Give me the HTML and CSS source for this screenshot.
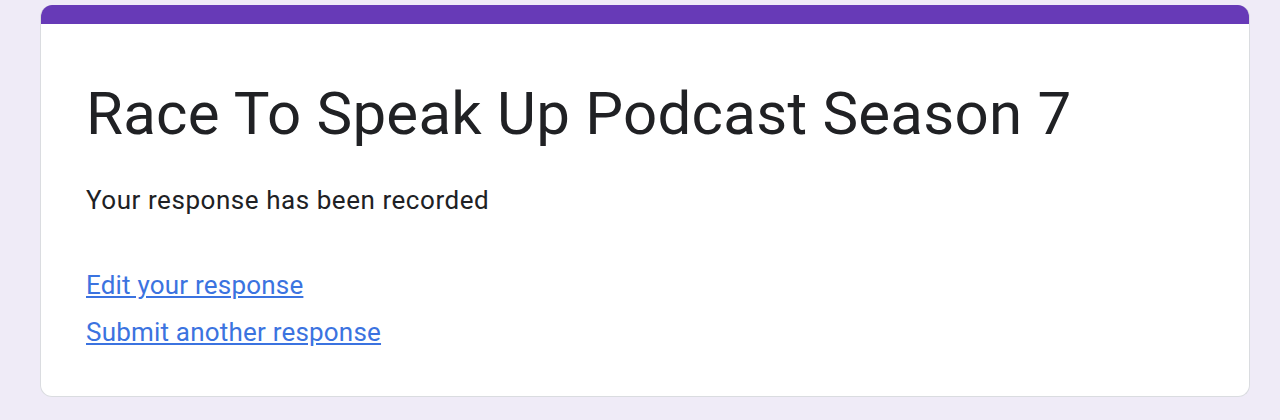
FILE: index.html
```html
<!DOCTYPE html>
<html>
<head>
<meta charset="utf-8">
<link rel="stylesheet" href="styles.css">
</head>
<body>
<div class="page">
  <div class="card">
    <div class="card-top"></div>
    <div class="card-body">
      <h1 class="title">Race To Speak Up Podcast Season 7</h1>
      <p class="message">Your response has been recorded</p>
      <div class="links">
        <a class="link" href="#">Edit your response</a>
        <a class="link" href="#">Submit another response</a>
      </div>
    </div>
  </div>
</div>
</body>
</html>
```
FILE: styles.css
```css
html, body {
  margin: 0;
  padding: 0;
  background: #efebf7;
  font-family: Roboto, "Noto Sans", Arial, sans-serif;
}
.page {
  padding: 5px 30px 0 40px;
}
.card {
  background: #fff;
  border: 1px solid #dadce0;
  border-top: none;
  border-radius: 12px;
  overflow: hidden;
  height: 392px;
  box-sizing: border-box;
}
.card-top {
  height: 19px;
  background: #673ab7;
}
.card-body {
  padding: 0 45px;
}
.title {
  margin: 54px 0 0;
  font-size: 60px;
  font-weight: 400;
  line-height: 72px;
  color: #202124;
  letter-spacing: 0.25px;
}
.message {
  margin: 34px 0 0;
  font-size: 26px;
  line-height: 32px;
  color: #202124;
  letter-spacing: 0.55px;
}
.links {
  margin-top: 53px;
  display: flex;
  flex-direction: column;
  align-items: flex-start;
  gap: 15px;
}
.link {
  font-size: 26px;
  line-height: 32px;
  color: #3b73e0;
  text-decoration: underline;
  letter-spacing: 0.2px;
}
```
